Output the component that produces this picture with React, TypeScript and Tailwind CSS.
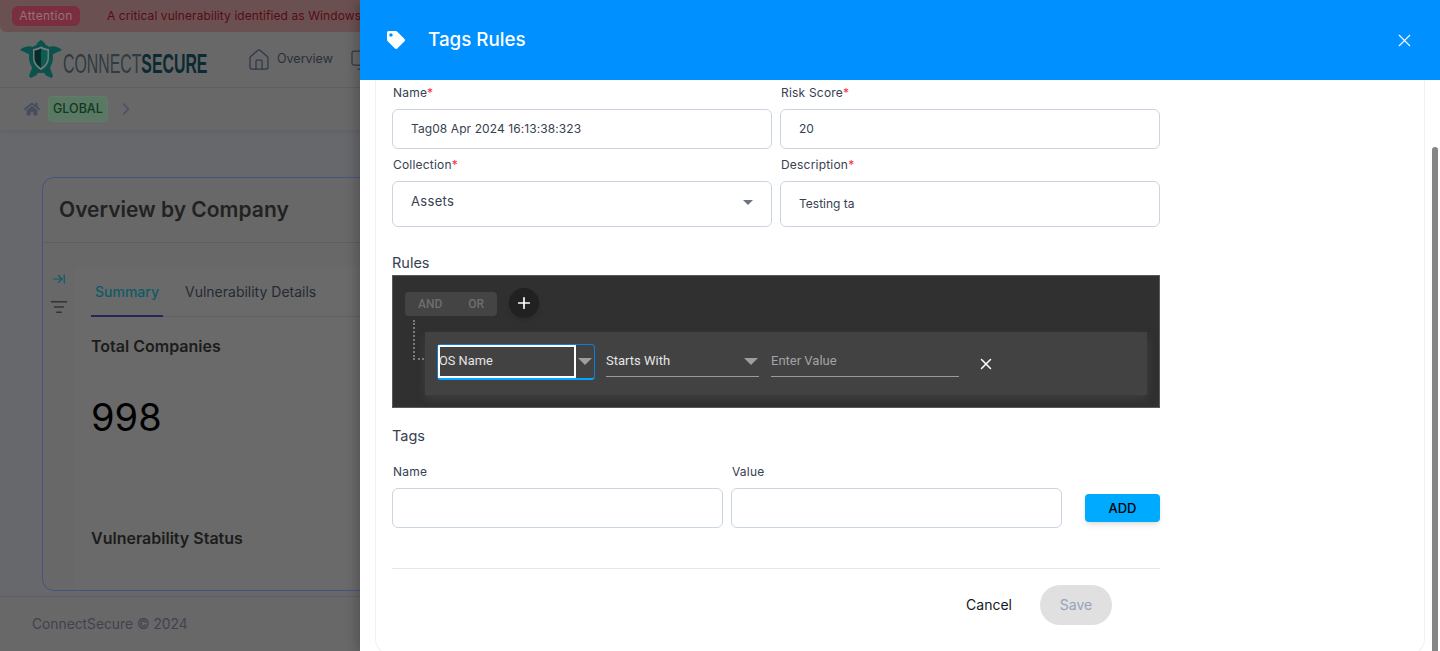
import { ArrowRightToLine, ChevronRight, House, ListFilter, Monitor, Plus, X } from 'lucide-react'
import { FaHome, FaTag } from 'react-icons/fa'

const inter = { fontFamily: 'Inter, sans-serif' }

function Logo() {
  return (
    <div className="flex items-center">
      <svg width="42" height="38" viewBox="0 0 42 38" className="shrink-0 -mt-[2px]">
        <g fill="#0b524c">
          <path d="M21 0c2 1 4.500 3 4.500 5.500h-9C16.500 3 19 1 21 0z" />
          <path d="M0 10c4-3.500 9-4.500 13-3l1.500 6c-2 1.500-5 2-7 .5C5 12.500 2.500 11 0 10z" />
          <path d="M42 10c-4-3.500-9-4.500-13-3l-1.500 6c2 1.500 5 2 7 .5 2.500-1 5-2.500 7.500-3.500z" />
          <path d="M13 25l-4 11 1.500 2 5.500-2.500 3-4z" />
          <path d="M29 25l4 11-1.500 2-5.500-2.500-3-4z" />
          <path d="M21 4c7 0 12 5 12 13s-5 16-12 16S9 25 9 17 14 4 21 4z" />
        </g>
        <path d="M21 6.500c3 1.500 5.500 2.500 8 2.500v8.500c0 6-3.500 10-8 12.500-4.500-2.500-8-6.500-8-12.500V9c2.500 0 5-1 8-2.500z" fill="#747d7b" />
        <path d="M21 8.500c-2.500 1.200-4.500 1.900-6.500 2.100v7c0 5 3 8 6.500 10.500z" fill="#072b2b" />
        <path d="M21 8.500c2.500 1.200 4.500 1.900 6.500 2.100v7c0 5-3 8-6.500 10.500z" fill="#0e5d55" />
      </svg>
      <div className="ml-[1px] mt-2 w-[144px]">
        <div className="origin-left scale-x-[0.566] whitespace-nowrap text-[28px] leading-[28px] text-[#2f3b40]" style={{ fontFamily: '"Liberation Sans", sans-serif' }}>
          CONNECT<span className="font-bold text-[#0c2a33]">SECURE</span>
        </div>
      </div>
    </div>
  )
}

// page behind the drawer, colours already dimmed by the overlay
function Background() {
  return (
    <div className="flex h-[651px] w-[1440px] flex-col bg-[#66686b]" style={inter}>
      <div className="flex h-8 items-center rounded-b-md bg-[#6b5052] pl-3 text-xs">
        <span className="flex h-5 w-[68px] items-center justify-center rounded-md bg-[#7a2f40] tracking-wide text-[#96707a]">Attention</span>
        <span className="ml-[27px] whitespace-nowrap tracking-[0.08px] text-[#550d12]">A critical vulnerability identified as Windows</span>
      </div>
      <div className="flex h-[56px] items-center border-b border-[#5f5f5f] bg-[#686868] pl-5">
        <Logo />
        <div className="ml-[40px] flex items-center text-[#2f3748]">
          <House size={24} strokeWidth={1.25} />
          <span className="ml-[6px] text-[12.500px] text-[#2a2f3a]">Overview</span>
          <Monitor size={24} strokeWidth={1.25} className="ml-[17px]" />
        </div>
      </div>
      <div className="flex h-[42px] items-center bg-[#686868] pl-6 text-[#474c5e] shadow-[0_2px_4px_rgba(0,0,0,0.06)]">
        <FaHome size={16} />
        <span className="ml-2 rounded-sm border border-[#607c68] bg-[#5b7865] px-1 py-[3px] text-[12.500px] font-medium leading-[18px] text-[#0e3a1e]">GLOBAL</span>
        <ChevronRight size={20} className="ml-2 text-[#4c5166]" />
      </div>
      <div className="min-h-0 flex-1 pb-[5px] pl-[42px] pt-[47px]">
        <div className="flex h-full w-[500px] flex-col rounded-l-xl border border-[#44557d] bg-[#686868]">
          <div className="flex h-[65px] items-center border-b border-[#5d5e60] pl-4 text-[21px] font-semibold text-[#222222]">Overview by Company</div>
          <div className="flex min-h-0 flex-1">
            <div className="flex w-[32px] flex-col items-center pt-[29px] text-[#333333]">
              <ArrowRightToLine size={14} className="text-[#0f5a68]" />
              <ListFilter size={18} strokeWidth={2} className="mt-3" />
            </div>
            <div className="mt-[24px] min-w-0 flex-1 bg-[#6a6a6a] pl-4">
              <div className="flex h-[50px] items-end border-b border-[#606060] text-sm">
                <span className="-mb-px border-b-2 border-[#26265a] px-1 pb-[13px] font-medium text-[#0f5a68]">Summary</span>
                <span className="ml-[22px] pb-[14px] text-[#262a33]">Vulnerability Details</span>
              </div>
              <div className="pt-[17px] text-base font-semibold text-[#1c1c1c]">Total Companies</div>
              <div className="mt-[32px] text-[38px] leading-[54px] text-black">998</div>
              <div className="mt-[82px] text-base font-semibold text-[#1c1c1c]">Vulnerability Status</div>
            </div>
          </div>
        </div>
      </div>
      <div className="flex h-[55px] items-center border-t border-[#5f6062] bg-[#686868] pl-8 text-[13.800px] text-[#3f434d]">ConnectSecure © 2024</div>
    </div>
  )
}

function Label({ text, required = true }: { text: string; required?: boolean }) {
  return (
    <label className="mb-2 block pl-[1px] text-xs leading-[17px] tracking-[0.2px] text-[#374151]">
      {text}
      {required && <span className="text-red-500">*</span>}
    </label>
  )
}

function RuleSelect({ label, className }: { label: string; className: string }) {
  return (
    <div className={`flex h-[33px] items-center justify-between border-b border-[#9a9a9a] pt-[2px] ${className}`}>
      <span>{label}</span>
      <span className="mr-[1px] h-0 w-0 border-x-[7px] border-t-[7px] border-x-transparent border-t-[#9e9e9e]" />
    </div>
  )
}

function RulesBuilder() {
  return (
    <div className="h-[133px] border border-[#5a5a5a] bg-[#303030] pl-3 pr-3 pt-3" style={{ fontFamily: 'Roboto, sans-serif' }}>
      <div className="flex items-center">
        <div className="mt-[2px] flex h-6 w-[92px] items-center justify-between rounded-sm bg-[#444444] px-[13px] text-xs font-medium text-[#6e6e6e]">
          <span>AND</span>
          <span>OR</span>
        </div>
        <button className="ml-3 flex h-[30px] w-[30px] items-center justify-center rounded-full bg-[#212121] text-white shadow-md">
          <Plus size={18} strokeWidth={2.25} />
        </button>
      </div>
      <div className="mt-[2px] flex">
        <div className="ml-[8px] h-[40px] w-[11px] border-b-2 border-l-2 border-dotted border-[#7a7a7a]" />
      </div>
      <div className="-mt-[28px] ml-5 flex h-[63px] items-start bg-[#424242] pl-3 pt-3 text-[13px] text-[#e5e5e5] shadow-[0_4px_8px_rgba(80,80,80,0.45)]">
        <div className="flex h-9 w-[158px] rounded-sm border border-b-2 border-[#0b7fd8] border-b-[#00a8ff]">
          <div className="flex h-[33px] w-[138px] items-center border-2 border-white pb-[2px] text-[12.800px]">
            <span className="-ml-px">OS Name</span>
          </div>
          <span className="ml-[2px] mt-[13px] h-0 w-0 border-x-[7px] border-t-[7px] border-x-transparent border-t-[#9e9e9e]" />
        </div>
        <RuleSelect label="Starts With" className="ml-[11px] w-[153px]" />
        <div className="ml-3 flex h-[33px] w-[188px] items-center border-b border-[#9a9a9a] pt-[2px] text-[#a3a3a3]">Enter Value</div>
        <X size={18} strokeWidth={2} className="ml-[18px] mt-[11px] text-white" />
      </div>
    </div>
  )
}

function TagsRulesDrawer() {
  return (
    <div className="absolute inset-y-0 right-0 flex w-[1080px] flex-col bg-white shadow-[-4px_0_10px_rgba(0,0,0,0.2)]" style={inter}>
      <div className="flex h-20 shrink-0 items-center bg-[#0090ff] pl-[27px] pr-[25px] text-white">
        <FaTag size={18} />
        <h2 className="ml-[23px] pt-[1px] text-[18.800px] font-medium">Tags Rules</h2>
        <X size={21} strokeWidth={1.25} className="ml-auto" />
      </div>
      <div className="relative min-h-0 flex-1 pl-[15px] pr-4">
        <div className="h-[calc(100%+4px)] w-[1050px] rounded-b-2xl border-x border-b border-[#eef1f6] pl-4 pt-1">
          <div className="w-[768px]">
            <div className="grid grid-cols-2 gap-x-2">
              <div>
                <Label text="Name" />
                <div className="flex h-10 items-center rounded-md border border-[#cbd5e1] pl-[18px] text-xs tracking-[0.08px] text-[#374151]">Tag08 Apr 2024 16:13:38:323</div>
              </div>
              <div>
                <Label text="Risk Score" />
                <div className="flex h-10 items-center rounded-md border border-[#cbd5e1] pl-[18px] text-xs text-[#374151]">20</div>
              </div>
              <div className="mt-[7px]">
                <Label text="Collection" />
                <div className="flex h-[46px] items-center justify-between rounded-md border border-[#cbd5e1] pb-1 pl-[18px] pr-[18px] text-[13px] tracking-wide text-[#374151]">
                  Assets
                  <span className="h-0 w-0 border-x-[5px] border-t-[5px] border-x-transparent border-t-[#6b7280]" />
                </div>
              </div>
              <div className="mt-[7px]">
                <Label text="Description" />
                <div className="flex h-[46px] items-center rounded-md border border-[#cbd5e1] pl-[18px] text-xs text-[#374151]">Testing ta</div>
              </div>
            </div>
            <div className="mb-[2px] mt-[26px] text-[14.500px] leading-5 text-[#374151]">Rules</div>
            <RulesBuilder />
            <div className="mt-[18px] text-[14.500px] leading-5 text-[#374151]">Tags</div>
            <div className="mt-[17px] flex items-end">
              <div className="w-[331px]">
                <Label text="Name" required={false} />
                <div className="h-10 rounded-md border border-[#cbd5e1]" />
              </div>
              <div className="ml-2 w-[331px]">
                <Label text="Value" required={false} />
                <div className="h-10 rounded-md border border-[#cbd5e1]" />
              </div>
              <button className="mb-[6px] ml-[23px] h-7 w-[75px] rounded-sm bg-[#00aaff] pt-[1px] text-[13px] font-medium text-black shadow-md">ADD</button>
            </div>
            <div className="mt-10 border-t border-[#e2e8f0]" />
            <div className="mt-4 flex items-center pr-[48px]">
              <span className="ml-auto text-sm text-[#111827]">Cancel</span>
              <button className="ml-7 h-10 w-[72px] rounded-full bg-[#e0e0e0] text-sm text-[#94a3b8]">Save</button>
            </div>
          </div>
        </div>
        <div className="absolute bottom-0 right-[2px] top-[67px] w-[6px] rounded-t-full bg-[#858585]" />
      </div>
    </div>
  )
}

export default function App() {
  return (
    <div className="relative h-[651px] w-[1440px] overflow-hidden">
      <Background />
      <TagsRulesDrawer />
    </div>
  )
}
